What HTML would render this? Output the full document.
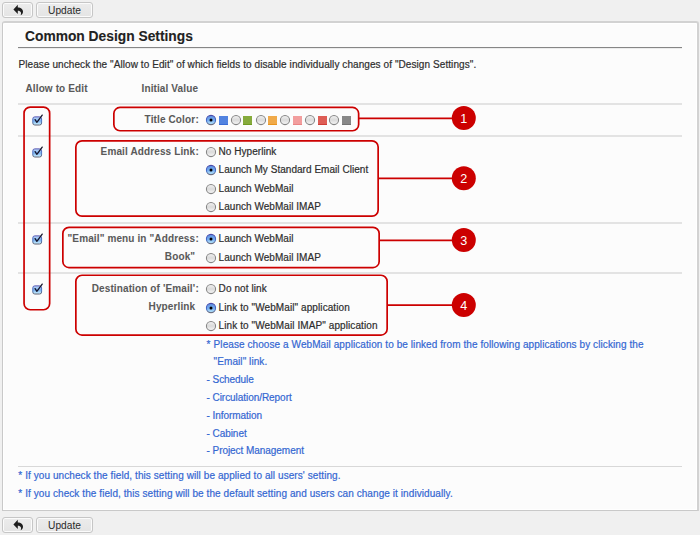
<!DOCTYPE html>
<html><head><meta charset="utf-8">
<style>
*{margin:0;padding:0;box-sizing:border-box}
html,body{width:700px;height:535px;overflow:hidden;background:#f0f0f0;font-family:"Liberation Sans",sans-serif;}
.a{position:absolute}
.t{position:absolute;white-space:nowrap;font-size:10px;line-height:12px;color:#2e2e2e;-webkit-text-stroke:0.2px;letter-spacing:0.08px}
.b{font-weight:bold;color:#5a5a5a;-webkit-text-stroke:0.05px;font-size:10px;letter-spacing:0.12px}
.bl{color:#3467d2}
.btn{position:absolute;height:16px;border:1px solid #c6c6c6;border-radius:3px;background:linear-gradient(#ececec,#e4e4e4);box-shadow:inset 0 0 0 1px #fbfbfb}
.btn span{position:absolute;left:0;right:0;top:2px;text-align:center;font-size:10.2px;line-height:12px;color:#2a2a2a}
.panel{position:absolute;left:2px;top:21px;width:697px;height:490px;border:1px solid #c9c9c9;border-top:2px solid #d2d2d2;border-right:2px solid #d2d2d2;background:#fcfcfc;box-shadow:inset 1px 1px 0 #fff,inset -1px -1px 0 #fff;border-radius:3px 3px 0 0}
.sep{position:absolute;left:18px;width:664px;height:1px;background:#dcdcdc}
.rule{position:absolute;left:18px;width:664px;height:1px;background:#868686;box-shadow:0 1px 0 #ececec}
.sw{position:absolute;width:9px;height:9px}
.rr{position:absolute;border:2px solid #cc0000;border-radius:7px}
.ln{position:absolute;height:2px;background:#cc0000}
.num{position:absolute;width:24px;height:24px;color:#fff;text-align:center;font-size:12.6px;line-height:26px}
</style></head><body>
<svg width="0" height="0" style="position:absolute"><defs>
<linearGradient id="cbf" x1="0" y1="0" x2="0" y2="1"><stop offset="0" stop-color="#c2daf8"/><stop offset="0.5" stop-color="#78aeee"/><stop offset="1" stop-color="#d0f6ff"/></linearGradient>
<linearGradient id="cbs" x1="0" y1="0" x2="0" y2="1"><stop offset="0" stop-color="#5050b0"/><stop offset="0.5" stop-color="#4a78c8"/><stop offset="1" stop-color="#606070"/></linearGradient>
<linearGradient id="ron" x1="0" y1="0" x2="0" y2="1"><stop offset="0" stop-color="#5a8ee0"/><stop offset="0.55" stop-color="#78acef"/><stop offset="1" stop-color="#c0f2ff"/></linearGradient>
<linearGradient id="ronr" x1="0" y1="0" x2="0" y2="1"><stop offset="0" stop-color="#4a48a8"/><stop offset="0.6" stop-color="#3f6fd0"/><stop offset="1" stop-color="#707080"/></linearGradient>
<linearGradient id="roff" x1="0" y1="0" x2="0" y2="1"><stop offset="0" stop-color="#f2f2f2"/><stop offset="0.5" stop-color="#dadada"/><stop offset="1" stop-color="#f8f8f8"/></linearGradient>
</defs></svg>
<div class="btn" style="left:2px;top:2px;width:31px"><svg class="a" style="left:10px;top:1px" width="12" height="12" viewBox="0 0 12 12"><path d="M0.4 5.4 L4.8 0.8 L4.8 3.5 C8 3.5 10.2 5.4 10 8 C9.9 9.6 9 10.6 7.6 11.2 C8.6 9.6 8.2 6.8 4.8 6.8 L4.8 9.9 Z" fill="#1e1e1e"/></svg></div>
<div class="btn" style="left:36px;top:2px;width:57px"><span>Update</span></div>
<div class="panel"></div>
<div class="t" style="left:25px;top:29px;font-size:13.8px;line-height:16px;font-weight:bold;color:#222;letter-spacing:0;-webkit-text-stroke:0.1px">Common Design Settings</div>
<div class="rule" style="top:47px"></div>
<div class="t " style="left:18.50px;top:59.00px;">Please uncheck the "Allow to Edit" of which fields to disable individually changes of "Design Settings".</div>
<div class="t b" style="left:25.50px;top:83.00px;">Allow to Edit</div>
<div class="t b" style="left:141.50px;top:83.00px;">Initial Value</div>
<div class="sep" style="top:103px;height:2px;background:#e3e3e3"></div>
<div class="sep" style="top:135px;height:2px;background:#e3e3e3"></div>
<div class="sep" style="top:222px;height:2px;background:#e3e3e3"></div>
<div class="sep" style="top:272px;height:2px;background:#e3e3e3"></div>
<div class="sep" style="top:466px;height:1px;background:#d8d8d8"></div>
<svg class="a" style="left:32px;top:114.10px" width="12" height="12" viewBox="0 0 12 12"><rect x="0.8" y="2.9" width="8.8" height="8.1" rx="2" fill="url(#cbf)" stroke="url(#cbs)" stroke-width="1"/><path d="M3.1 5.6 L4.9 8.3 L10.2 1.1" fill="none" stroke="#15152a" stroke-width="1.3" stroke-linecap="round" stroke-linejoin="round"/></svg>
<svg class="a" style="left:32px;top:145.70px" width="12" height="12" viewBox="0 0 12 12"><rect x="0.8" y="2.9" width="8.8" height="8.1" rx="2" fill="url(#cbf)" stroke="url(#cbs)" stroke-width="1"/><path d="M3.1 5.6 L4.9 8.3 L10.2 1.1" fill="none" stroke="#15152a" stroke-width="1.3" stroke-linecap="round" stroke-linejoin="round"/></svg>
<svg class="a" style="left:32px;top:233.10px" width="12" height="12" viewBox="0 0 12 12"><rect x="0.8" y="2.9" width="8.8" height="8.1" rx="2" fill="url(#cbf)" stroke="url(#cbs)" stroke-width="1"/><path d="M3.1 5.6 L4.9 8.3 L10.2 1.1" fill="none" stroke="#15152a" stroke-width="1.3" stroke-linecap="round" stroke-linejoin="round"/></svg>
<svg class="a" style="left:32px;top:283.10px" width="12" height="12" viewBox="0 0 12 12"><rect x="0.8" y="2.9" width="8.8" height="8.1" rx="2" fill="url(#cbf)" stroke="url(#cbs)" stroke-width="1"/><path d="M3.1 5.6 L4.9 8.3 L10.2 1.1" fill="none" stroke="#15152a" stroke-width="1.3" stroke-linecap="round" stroke-linejoin="round"/></svg>
<div class="t b" style="right:504.80px;top:114.00px;">Title Color</div>
<div class="t b" style="left:195.50px;top:114.00px;">:</div>
<svg class="a" style="left:204.90px;top:114.30px" width="12" height="12" viewBox="0 0 12 12"><circle cx="6" cy="6" r="4.6" fill="url(#ron)" stroke="url(#ronr)" stroke-width="1.1"/><circle cx="6" cy="6" r="1.5" fill="#000"/></svg>
<div class="sw" style="left:219px;top:116px;background:#5283e0;border-bottom:1px solid #3a6cd6"></div>
<svg class="a" style="left:229.80px;top:114.30px" width="12" height="12" viewBox="0 0 12 12"><circle cx="6" cy="6" r="4.6" fill="url(#roff)" stroke="#858585" stroke-width="1.05"/></svg>
<div class="sw" style="left:243px;top:116px;background:#86ab3c;border-bottom:1px solid #6f9a22"></div>
<svg class="a" style="left:254.50px;top:114.30px" width="12" height="12" viewBox="0 0 12 12"><circle cx="6" cy="6" r="4.6" fill="url(#roff)" stroke="#858585" stroke-width="1.05"/></svg>
<div class="sw" style="left:268px;top:116px;background:#f0aa4a;border-bottom:1px solid #e9951e"></div>
<svg class="a" style="left:279.10px;top:114.30px" width="12" height="12" viewBox="0 0 12 12"><circle cx="6" cy="6" r="4.6" fill="url(#roff)" stroke="#858585" stroke-width="1.05"/></svg>
<div class="sw" style="left:293px;top:116px;background:#f29e9e;border-bottom:1px solid #ea8585"></div>
<svg class="a" style="left:303.80px;top:114.30px" width="12" height="12" viewBox="0 0 12 12"><circle cx="6" cy="6" r="4.6" fill="url(#roff)" stroke="#858585" stroke-width="1.05"/></svg>
<div class="sw" style="left:318px;top:116px;background:#de5d55;border-bottom:1px solid #d03c36"></div>
<svg class="a" style="left:328.40px;top:114.30px" width="12" height="12" viewBox="0 0 12 12"><circle cx="6" cy="6" r="4.6" fill="url(#roff)" stroke="#858585" stroke-width="1.05"/></svg>
<div class="sw" style="left:342px;top:116px;background:#888888;border-bottom:1px solid #747474"></div>
<div class="t b" style="right:504.80px;top:146.00px;">Email Address Link</div>
<div class="t b" style="left:195.50px;top:146.00px;">:</div>
<svg class="a" style="left:205.10px;top:146.00px" width="12" height="12" viewBox="0 0 12 12"><circle cx="6" cy="6" r="4.6" fill="url(#roff)" stroke="#858585" stroke-width="1.05"/></svg>
<div class="t " style="left:218.60px;top:146.00px;letter-spacing:0.04px">No Hyperlink</div>
<svg class="a" style="left:205.10px;top:164.40px" width="12" height="12" viewBox="0 0 12 12"><circle cx="6" cy="6" r="4.6" fill="url(#ron)" stroke="url(#ronr)" stroke-width="1.1"/><circle cx="6" cy="6" r="1.5" fill="#000"/></svg>
<div class="t " style="left:218.60px;top:164.40px;letter-spacing:0.04px">Launch My Standard Email Client</div>
<svg class="a" style="left:205.10px;top:183.00px" width="12" height="12" viewBox="0 0 12 12"><circle cx="6" cy="6" r="4.6" fill="url(#roff)" stroke="#858585" stroke-width="1.05"/></svg>
<div class="t " style="left:218.60px;top:183.00px;letter-spacing:0.04px">Launch WebMail</div>
<svg class="a" style="left:205.10px;top:201.40px" width="12" height="12" viewBox="0 0 12 12"><circle cx="6" cy="6" r="4.6" fill="url(#roff)" stroke="#858585" stroke-width="1.05"/></svg>
<div class="t " style="left:218.60px;top:201.40px;letter-spacing:0.04px">Launch WebMail IMAP</div>
<div class="t b" style="right:504.80px;top:233.00px;">"Email" menu in "Address</div>
<div class="t b" style="left:195.50px;top:233.00px;">:</div>
<svg class="a" style="left:205.10px;top:233.00px" width="12" height="12" viewBox="0 0 12 12"><circle cx="6" cy="6" r="4.6" fill="url(#ron)" stroke="url(#ronr)" stroke-width="1.1"/><circle cx="6" cy="6" r="1.5" fill="#000"/></svg>
<div class="t " style="left:218.60px;top:233.00px;letter-spacing:0.04px">Launch WebMail</div>
<div class="t b" style="right:504.80px;top:251.00px;">Book"</div>
<svg class="a" style="left:205.10px;top:252.00px" width="12" height="12" viewBox="0 0 12 12"><circle cx="6" cy="6" r="4.6" fill="url(#roff)" stroke="#858585" stroke-width="1.05"/></svg>
<div class="t " style="left:218.60px;top:252.00px;letter-spacing:0.04px">Launch WebMail IMAP</div>
<div class="t b" style="right:504.80px;top:283.00px;">Destination of 'Email'</div>
<div class="t b" style="left:195.50px;top:283.00px;">:</div>
<svg class="a" style="left:205.10px;top:283.00px" width="12" height="12" viewBox="0 0 12 12"><circle cx="6" cy="6" r="4.6" fill="url(#roff)" stroke="#858585" stroke-width="1.05"/></svg>
<div class="t " style="left:218.60px;top:283.00px;letter-spacing:0.09px">Do not link</div>
<div class="t b" style="right:504.80px;top:301.00px;">Hyperlink</div>
<svg class="a" style="left:205.10px;top:302.00px" width="12" height="12" viewBox="0 0 12 12"><circle cx="6" cy="6" r="4.6" fill="url(#ron)" stroke="url(#ronr)" stroke-width="1.1"/><circle cx="6" cy="6" r="1.5" fill="#000"/></svg>
<div class="t " style="left:218.60px;top:302.00px;letter-spacing:0.09px">Link to "WebMail" application</div>
<svg class="a" style="left:205.10px;top:320.00px" width="12" height="12" viewBox="0 0 12 12"><circle cx="6" cy="6" r="4.6" fill="url(#roff)" stroke="#858585" stroke-width="1.05"/></svg>
<div class="t " style="left:218.60px;top:320.00px;letter-spacing:0.09px">Link to "WebMail IMAP" application</div>
<div class="t bl" style="left:206.60px;top:338.60px;">*</div>
<div class="t bl" style="left:213.60px;top:338.60px;">Please choose a WebMail application to be linked from the following applications by clicking the</div>
<div class="t bl" style="left:213.60px;top:356.40px;">"Email" link.</div>
<div class="t bl" style="left:206.50px;top:374.00px;letter-spacing:-0.05px">- Schedule</div>
<div class="t bl" style="left:206.50px;top:391.80px;letter-spacing:-0.05px">- Circulation/Report</div>
<div class="t bl" style="left:206.50px;top:409.70px;letter-spacing:-0.05px">- Information</div>
<div class="t bl" style="left:206.50px;top:427.50px;letter-spacing:-0.05px">- Cabinet</div>
<div class="t bl" style="left:206.50px;top:445.20px;letter-spacing:-0.05px">- Project Management</div>
<div class="t bl" style="left:18.30px;top:470.40px;">* If you uncheck the field, this setting will be applied to all users' setting.</div>
<div class="t bl" style="left:18.30px;top:487.90px;">* If you check the field, this setting will be the default setting and users can change it individually.</div>
<div class="btn" style="left:2px;top:517px;width:31px"><svg class="a" style="left:10px;top:1px" width="12" height="12" viewBox="0 0 12 12"><path d="M0.4 5.4 L4.8 0.8 L4.8 3.5 C8 3.5 10.2 5.4 10 8 C9.9 9.6 9 10.6 7.6 11.2 C8.6 9.6 8.2 6.8 4.8 6.8 L4.8 9.9 Z" fill="#1e1e1e"/></svg></div>
<div class="btn" style="left:36px;top:517px;width:57px"><span>Update</span></div>
<svg class="a" style="left:0;top:0" width="700" height="535" viewBox="0 0 700 535"><rect x="24.05" y="107.05" width="25.60" height="202.70" rx="6.15" fill="none" stroke="#cc0000" stroke-width="1.70"/><rect x="113.85" y="107.45" width="244.80" height="23.30" rx="6.15" fill="none" stroke="#cc0000" stroke-width="1.70"/><rect x="75.85" y="140.85" width="302.30" height="75.30" rx="6.15" fill="none" stroke="#cc0000" stroke-width="1.70"/><rect x="62.85" y="227.35" width="316.30" height="40.20" rx="6.15" fill="none" stroke="#cc0000" stroke-width="1.70"/><rect x="75.85" y="275.25" width="311.30" height="59.80" rx="6.15" fill="none" stroke="#cc0000" stroke-width="1.70"/><line x1="359.00" y1="118.40" x2="460" y2="118.40" stroke="#cc0000" stroke-width="1.70"/><line x1="378.50" y1="178.40" x2="460" y2="178.40" stroke="#cc0000" stroke-width="1.70"/><line x1="379.50" y1="240.40" x2="460" y2="240.40" stroke="#cc0000" stroke-width="1.70"/><line x1="387.50" y1="305.20" x2="460" y2="305.20" stroke="#cc0000" stroke-width="1.70"/><circle cx="463.8" cy="118.00" r="12" fill="#cc0000"/><circle cx="463.8" cy="178.30" r="12" fill="#cc0000"/><circle cx="463.8" cy="240.00" r="12" fill="#cc0000"/><circle cx="463.8" cy="304.90" r="12" fill="#cc0000"/></svg>
<div class="num" style="left:451.8px;top:106px">1</div>
<div class="num" style="left:451.8px;top:166.3px">2</div>
<div class="num" style="left:451.8px;top:228px">3</div>
<div class="num" style="left:451.8px;top:292.9px">4</div>
</body></html>
